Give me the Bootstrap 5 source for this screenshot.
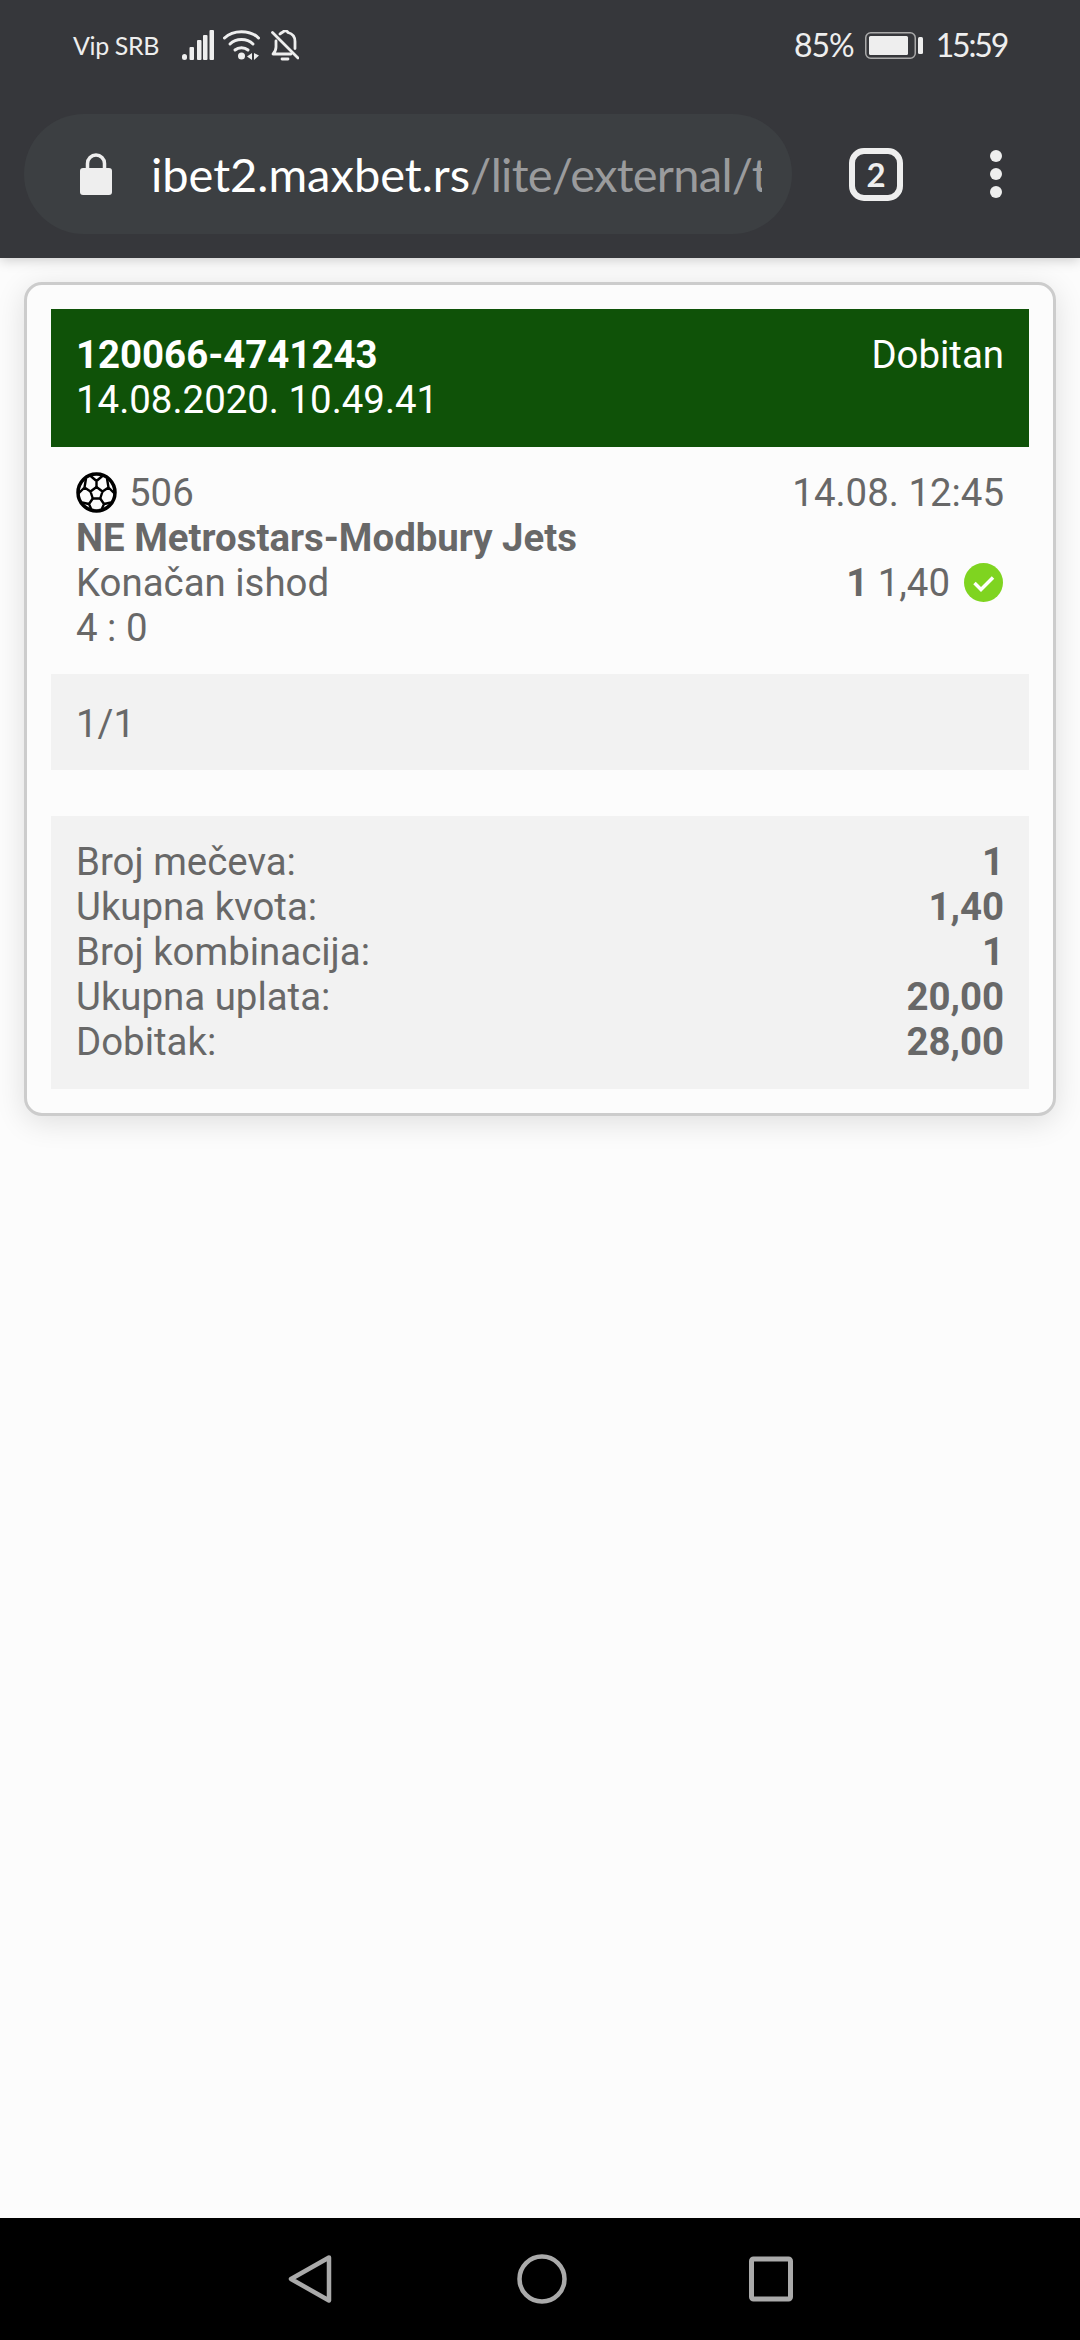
<!DOCTYPE html>
<html lang="sr">
<head>
  <meta charset="UTF-8">
  <title>Tiket</title>
  <link href="https://cdn.jsdelivr.net/npm/bootstrap@5.3.3/dist/css/bootstrap.min.css" rel="stylesheet">
  <style>
    html, body { height: 100%; }
    body { background: #fcfcfc; color: #686868; font-family: Roboto, "Liberation Sans", sans-serif; font-size: 38.4px; line-height: 45px; }
    .screen { width: 1080px; height: 2340px; }

    .top-chrome { height: 258px; background: #36373b; box-shadow: 0 2px 12px rgba(0,0,0,.2); position: relative; }
    .status-row { height: 114px; padding: 0 73px 24px 73px; font-family: Lato, sans-serif; color: #eee; }
    .carrier { font-size: 25px; line-height: 30px; width: 109px; letter-spacing: -.4px; }
    .clock-txt { font-size: 32px; line-height: 36px; letter-spacing: -1px; }
    .clock-time { margin-left: 13px; letter-spacing: -2.2px; }
    .tool-row { height: 120px; padding-left: 24px; }
    .omnibox { width: 768px; height: 120px; background: #3c3f42; border-radius: 60px; padding-left: 56px; }
    .url-txt { width: 611px; margin-left: 39px; overflow: hidden; white-space: nowrap; font-family: Lato, sans-serif; font-size: 47px; line-height: 60px; color: #9a9b9d; letter-spacing: -.7px; }
    .url-txt b { color: #fff; font-weight: 400; letter-spacing: 0; }
    .tabs-box { width: 54px; height: 53px; margin-left: 57px; border: 6px solid #eee; border-radius: 15px; color: #eee; font-family: Lato, sans-serif; font-weight: 700; font-size: 33px; line-height: 1; }
    .dots { margin-left: 87px; gap: 6px; }
    .dots i { display: block; width: 12px; height: 12px; border-radius: 50%; background: #eee; }

    .page-area { padding: 24px 24px 0; }
    .ticket { background: #fcfcfc; border: 3px solid #ccc; border-radius: 18px; padding: 24px; box-shadow: 0 6px 30px rgba(0,0,0,.12); color: #686868; }
    .ticket-head { background: #0f5208; color: #fff; padding: 23px 25px 25px; }
    .match-box { padding: 23px 25px 24px; }
    .ball { width: 41px; height: 41px; margin-right: 12px; }
    .ok-mark { width: 39px; height: 39px; margin: 0 1px 0 14px; }
    .grey-box { background: #f2f2f2; padding: 23px 25px 25px; }
    .pair-box { padding-top: 27px; padding-bottom: 24px; }
    .sum-box { margin-top: 46px; }

    .bottom-nav { height: 122px; background: #000; }
    .nav-mid { margin: 0 182px 0 185px; }
  </style>
</head>
<body>

<div class="screen d-flex flex-column">
  <div class="top-chrome">
    <div class="status-row d-flex align-items-center justify-content-between">
      <div class="d-flex align-items-center">
        <span class="carrier">Vip SRB</span>
        <svg width="32" height="30" viewBox="0 0 32 30">
          <g fill="#eee"><rect x="0" y="24" width="5" height="6" rx="2.500"/><rect x="7.500" y="17" width="4.500" height="13" rx="1"/><rect x="15" y="10" width="4.500" height="20" rx="1"/><rect x="21" y="5" width="4.500" height="25" rx="1"/><rect x="27.500" y="0" width="4.500" height="30" rx="1"/></g>
        </svg>
        <svg width="37" height="30" viewBox="0 0 37 30" style="margin-left:9px">
          <g fill="none" stroke="#eee" stroke-width="3" stroke-linecap="round"><path d="M1.500 8C10-.5 27-.5 35.500 8"/><path d="M7 14C13 8 24 8 30 14"/><path d="M12 20C15.500 17 21.500 17 25 20"/></g>
          <circle cx="18.500" cy="26" r="3.500" fill="#eee"/>
          <path d="M29 23v7l-5-3.500zM31 23v7l5-4.500z" fill="#eee"/>
        </svg>
        <svg width="28" height="31" viewBox="0 0 28 31" style="margin-left:11px">
          <g fill="none" stroke="#eee" stroke-width="2.800" stroke-linecap="round" stroke-linejoin="round"><path d="M5 11v6c0 3-1 5-3 7h18"/><path d="M9 4c1-1 2-1.500 3-2 1-1.500 4-1.500 5 .5 4 1 7 4 7 9v7"/><path d="M1.500 2.500L27 28"/><path d="M11 29h6"/></g>
        </svg>
      </div>
      <div class="d-flex align-items-center">
        <span class="clock-txt">85%</span>
        <svg width="58" height="27" viewBox="0 0 58 27" style="margin-left:11px">
          <rect x=".75" y=".75" width="49.500" height="25.500" rx="5" fill="none" stroke="#aaa" stroke-width="1.500"/>
          <rect x="4" y="4" width="39" height="19" rx="1.500" fill="#eee"/>
          <rect x="53" y="5" width="5" height="17" rx="1.500" fill="#eee"/>
        </svg>
        <span class="clock-txt clock-time">15:59</span>
      </div>
    </div>
    <div class="tool-row d-flex align-items-center">
      <div class="omnibox d-flex align-items-center">
        <svg width="32" height="42" viewBox="0 0 32 42">
          <path d="M7.500 18V10.500a8.500 8.500 0 0 1 17 0V18" fill="none" stroke="#eee" stroke-width="3.500"/>
          <rect x="0" y="15" width="32" height="27" rx="3" fill="#eee"/>
        </svg>
        <div class="url-txt"><b>ibet2.maxbet.rs</b>/lite/external/t</div>
      </div>
      <div class="tabs-box d-flex align-items-center justify-content-center">2</div>
      <div class="dots d-flex flex-column"><i></i><i></i><i></i></div>
    </div>
  </div>

  <div class="page-area flex-grow-1">
    <div class="card ticket">
      <div class="ticket-head d-flex justify-content-between">
        <div>
          <div class="fw-bold">120066-4741243</div>
          <div>14.08.2020. 10.49.41</div>
        </div>
        <div>Dobitan</div>
      </div>

      <div class="match-box">
        <div class="d-flex justify-content-between">
          <div class="d-flex align-items-center">
            <svg class="ball" viewBox="0 0 41 41">
              <circle cx="20.500" cy="20.500" r="18.500" fill="none" stroke="#000" stroke-width="3.500"/>
              <g fill="none" stroke="#000" stroke-width="2.400" stroke-linejoin="round">
                <path d="M20.500 15l6 4.500-2.300 7h-7.400l-2.300-7z"/>
                <path d="M20.500 15V9M20.500 9l-7-6M20.500 9l7-6M26.500 19.500l6-4M32.500 15.500l-1.500-9M32.500 15.500l6 6M14.500 19.500l-6-4M8.500 15.500l1.500-9M8.500 15.500l-6 6M24.200 26.500l3.800 5.500M28 32l-3 7M28 32l7-1.500M16.800 26.500l-3.800 5.500M13 32l3 7M13 32l-7-1.500"/>
              </g>
            </svg>506
          </div>
          <div>14.08. 12:45</div>
        </div>
        <div class="fw-bold">NE Metrostars-Modbury Jets</div>
        <div class="d-flex justify-content-between">
          <div>Konačan ishod</div>
          <div class="d-flex align-items-center">
            <span><span class="fw-bold">1</span> 1,40</span>
            <svg class="ok-mark" viewBox="0 0 39 39">
              <circle cx="19.500" cy="19.500" r="19.500" fill="#7fd420"/>
              <path d="M10.500 20l6.500 6.500 12-12" fill="none" stroke="#fff" stroke-width="3.500"/>
            </svg>
          </div>
        </div>
        <div>4 : 0</div>
      </div>

      <div class="grey-box pair-box">1/1</div>

      <div class="grey-box sum-box">
        <div class="d-flex justify-content-between"><span>Broj mečeva:</span><span class="fw-bold">1</span></div>
        <div class="d-flex justify-content-between"><span>Ukupna kvota:</span><span class="fw-bold">1,40</span></div>
        <div class="d-flex justify-content-between"><span>Broj kombinacija:</span><span class="fw-bold">1</span></div>
        <div class="d-flex justify-content-between"><span>Ukupna uplata:</span><span class="fw-bold">20,00</span></div>
        <div class="d-flex justify-content-between"><span>Dobitak:</span><span class="fw-bold">28,00</span></div>
      </div>
    </div>
  </div>

  <div class="bottom-nav d-flex align-items-center justify-content-center">
    <svg width="44" height="50" viewBox="0 0 44 50">
      <path d="M41 3.500L3 25l38 21.500z" fill="none" stroke="#aaa" stroke-width="4.500" stroke-linejoin="round"/>
    </svg>
    <svg class="nav-mid" width="50" height="50" viewBox="0 0 50 50">
      <circle cx="25" cy="25" r="22.500" fill="none" stroke="#aaa" stroke-width="4.500"/>
    </svg>
    <svg width="44" height="46" viewBox="0 0 44 46">
      <rect x="2.500" y="3" width="39" height="40" rx="2" fill="none" stroke="#aaa" stroke-width="5"/>
    </svg>
  </div>
</div>

<script src="https://cdn.jsdelivr.net/npm/bootstrap@5.3.3/dist/js/bootstrap.bundle.min.js"></script>
</body>
</html>
